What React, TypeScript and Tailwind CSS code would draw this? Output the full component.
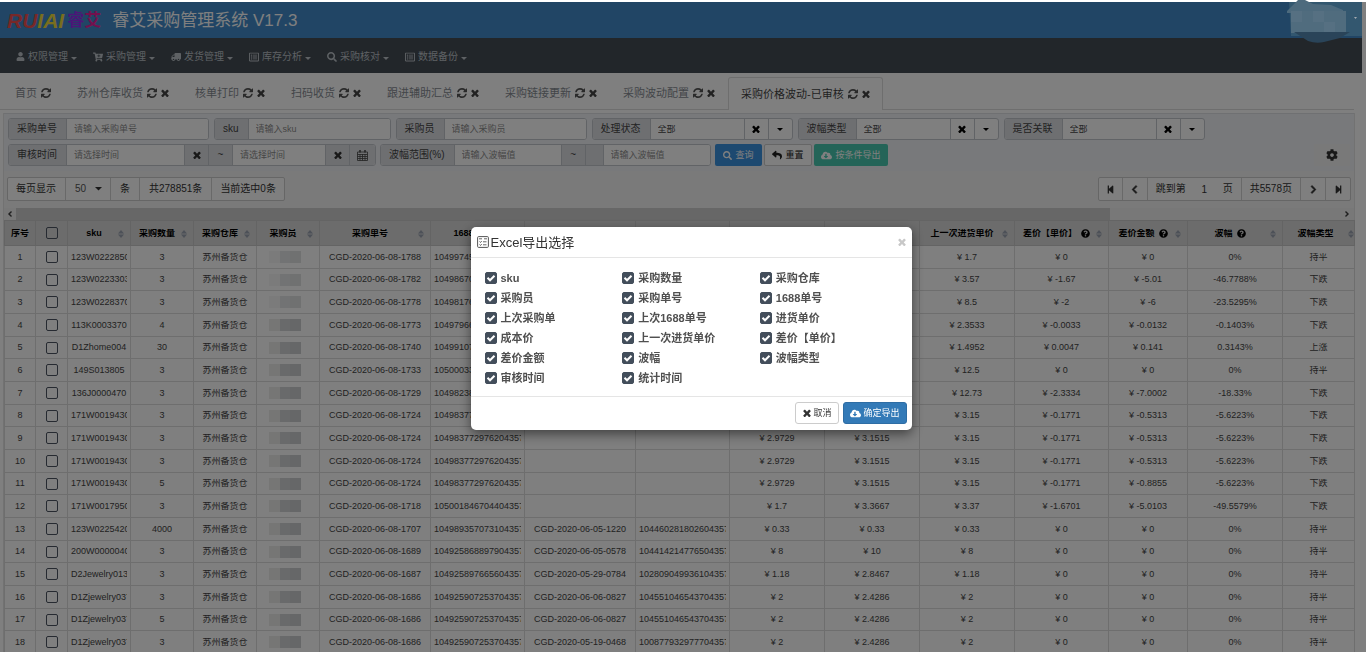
import { useState } from "react";
import type { ReactNode } from "react";
import {
  FaCartPlus,
  FaChevronLeft,
  FaChevronRight,
  FaCloudDownloadAlt,
  FaCog,
  FaQuestionCircle,
  FaRegListAlt,
  FaReply,
  FaSearch,
  FaStepBackward,
  FaStepForward,
  FaTruck,
  FaUser,
} from "react-icons/fa";

const TimesIcon = () => (
  <svg viewBox="256 256 1280 1280" fill="currentColor" className="size-2 shrink-0">
    <path d="M1490 1322q0 40-28 68l-136 136q-28 28-68 28t-68-28l-294-294-294 294q-28 28-68 28t-68-28l-136-136q-28-28-28-68t28-68l294-294-294-294q-28-28-28-68t28-68l136-136q28-28 68-28t68 28l294 294 294-294q28-28 68-28t68 28l136 136q28 28 28 68t-28 68l-294 294 294 294q28 28 28 68z" />
  </svg>
);

const RefreshIcon = () => (
  <svg viewBox="128 128 1536 1536" fill="currentColor" className="size-[10px]">
    <path d="M1639 1056q0 5-1 7-64 268-268 434.500t-478 166.500q-146 0-282.500-55t-243.500-157l-129 129q-19 19-45 19t-45-19-19-45v-448q0-26 19-45t45-19h448q26 0 45 19t19 45-19 45l-137 137q71 66 161 102t187 36q134 0 250-65t186-179q11-17 53-117 8-23 30-23h192q13 0 22.500 9.500t9.500 22.500zm25-800v448q0 26-19 45t-45 19h-448q-26 0-45-19t-19-45 19-45l138-138q-148-137-349-137-134 0-250 65t-186 179q-11 17-53 117-8 23-30 23h-199q-13 0-22.500-9.500t-9.500-22.500v-7q65-268 270-434.500t480-166.500q146 0 284 55.500t245 156.500l130-129q19-19 45-19t45 19 19 45z" />
  </svg>
);

const CaretIcon = ({ className = "w-[7px]" }: { className?: string }) => (
  <svg viewBox="0 0 8 4" fill="currentColor" className={className}>
    <path d="M0 0h8L4 4z" />
  </svg>
);

const SortIcon = () => (
  <svg viewBox="0 0 6 8" className="w-[6px] shrink-0 translate-y-px fill-[#9aa2b0]">
    <path d="M3 0l3 3.400H0zM3 8l3-3.400H0z" />
  </svg>
);

const CalendarIcon = () => (
  <svg viewBox="0 0 11 11" className="size-[11px]" fill="none" stroke="currentColor">
    <path d="M.5 2h10v8.500H.5zM.5 4.500h10M.5 6.500h10M.5 8.500h10M3 4v6.500M5.500 4v6.500M8 4v6.500" strokeWidth=".8" />
    <path d="M3 0v2.500M8 0v2.500" strokeWidth="1.500" />
  </svg>
);

const FormIcon = () => (
  <svg viewBox="0 0 12 12" className="size-3" fill="none" stroke="#555">
    <rect x=".6" y=".6" width="10.800" height="10.800" rx="1" />
    <path d="M2 2.800h3M7 2.800h3M2.500 5.500l1 1 1.200-1.500M6 5.800h3.500M2.500 8.500l1 1 1.200-1.500M6 8.800h3.500" strokeWidth=".9" />
  </svg>
);

const menus = [
  { title: "权限管理", icon: <FaUser className="size-[9px]" /> },
  { title: "采购管理", icon: <FaCartPlus className="size-[10px]" /> },
  { title: "发货管理", icon: <FaTruck className="size-[10px] -scale-x-100" /> },
  { title: "库存分析", icon: <FaRegListAlt className="size-[10px]" /> },
  { title: "采购核对", icon: <FaSearch className="size-[10px]" /> },
  { title: "数据备份", icon: <FaRegListAlt className="size-[10px]" /> },
];

const tabs = ["首页", "苏州仓库收货", "核单打印", "扫码收货", "跟进辅助汇总", "采购链接更新", "采购波动配置", "采购价格波动-已审核"];

const columns = [
  { title: "序号", width: "w-[31px]" },
  { title: "", width: "w-[32px]" },
  { title: "sku", width: "w-[63px]", sort: true },
  { title: "采购数量", width: "w-[63px]", sort: true },
  { title: "采购仓库", width: "w-[63px]", sort: true },
  { title: "采购员", width: "w-[63px]", sort: true },
  { title: "采购单号", width: "w-[111px]", sort: true },
  { title: "1688单号", width: "w-[94px]", sort: true },
  { title: "上次采购单", width: "w-[111px]", sort: true },
  { title: "上次1688单号", width: "w-[94px]", sort: true },
  { title: "进货单价", width: "w-[95px]", sort: true },
  { title: "成本价", width: "w-[95px]", sort: true },
  { title: "上一次进货单价", width: "w-[95px]", sort: true },
  { title: "差价【单价】", width: "w-[94px]", sort: true, help: true },
  { title: "差价金额", width: "w-[79px]", sort: true, help: true },
  { title: "波幅", width: "w-[95px]", sort: true, help: true },
  { title: "波幅类型", width: "w-[72px]", sort: true },
];

// sku, count, order, 1688 order, last order, last 1688 order, price, cost, last price, diff, diff total, rate, type
const rows = [
  ["123W0222850", "3", "CGD-2020-06-08-1788", "104997451297604357", "", "", "", "", "1.7", "0", "0", "0%", "持平"],
  ["123W0223303", "3", "CGD-2020-06-08-1782", "104986701297604357", "", "", "", "", "3.57", "-1.67", "-5.01", "-46.7788%", "下跌"],
  ["123W0228370", "3", "CGD-2020-06-08-1778", "104981761297604357", "", "", "", "", "8.5", "-2", "-6", "-23.5295%", "下跌"],
  ["113K0003370", "4", "CGD-2020-06-08-1773", "104979661297604357", "", "", "", "", "2.3533", "-0.0033", "-0.0132", "-0.1403%", "下跌"],
  ["D1Zhome004", "30", "CGD-2020-06-08-1740", "104991071297604357", "", "", "", "", "1.4952", "0.0047", "0.141", "0.3143%", "上涨"],
  ["149S013805", "3", "CGD-2020-06-08-1733", "105000331297604357", "", "", "", "", "12.5", "0", "0", "0%", "持平"],
  ["136J0000470", "3", "CGD-2020-06-08-1729", "104982381297604357", "", "", "", "", "12.73", "-2.3334", "-7.0002", "-18.33%", "下跌"],
  ["171W0019430", "3", "CGD-2020-06-08-1724", "104983772976204357", "", "", "", "", "3.15", "-0.1771", "-0.5313", "-5.6223%", "下跌"],
  ["171W0019430", "3", "CGD-2020-06-08-1724", "104983772976204357", "", "", "2.9729", "3.1515", "3.15", "-0.1771", "-0.5313", "-5.6223%", "下跌"],
  ["171W0019430", "3", "CGD-2020-06-08-1724", "104983772976204357", "", "", "2.9729", "3.1515", "3.15", "-0.1771", "-0.5313", "-5.6223%", "下跌"],
  ["171W0019430", "5", "CGD-2020-06-08-1724", "104983772976204357", "", "", "2.9729", "3.1515", "3.15", "-0.1771", "-0.8855", "-5.6223%", "下跌"],
  ["171W0017950", "3", "CGD-2020-06-08-1718", "105001846704404357", "", "", "1.7", "3.3667", "3.37", "-1.6701", "-5.0103", "-49.5579%", "下跌"],
  ["123W0225420", "4000", "CGD-2020-06-08-1707", "104989357073104357", "CGD-2020-06-05-1220", "104460281802604357", "0.33", "0.33", "0.33", "0", "0", "0%", "持平"],
  ["200W0000040", "3", "CGD-2020-06-08-1689", "104925868897904357", "CGD-2020-06-05-0578", "104414214776504357", "8", "10", "8", "0", "0", "0%", "持平"],
  ["D2Jewelry013", "3", "CGD-2020-06-08-1687", "104925897665604357", "CGD-2020-05-29-0784", "102809049936104357", "1.18", "2.8467", "1.18", "0", "0", "0%", "持平"],
  ["D1Zjewelry037", "3", "CGD-2020-06-08-1686", "104925907253704357", "CGD-2020-06-06-0827", "104551046543704357", "2", "2.4286", "2", "0", "0", "0%", "持平"],
  ["D1Zjewelry037", "5", "CGD-2020-06-08-1686", "104925907253704357", "CGD-2020-06-06-0827", "104551046543704357", "2", "2.4286", "2", "0", "0", "0%", "持平"],
  ["D1Zjewelry037", "3", "CGD-2020-06-08-1686", "104925907253704357", "CGD-2020-05-19-0468", "100877932977704357", "2", "2.4286", "2", "0", "0", "0%", "持平"],
];

const exportFields = [
  "sku", "采购数量", "采购仓库",
  "采购员", "采购单号", "1688单号",
  "上次采购单", "上次1688单号", "进货单价",
  "成本价", "上一次进货单价", "差价【单价】",
  "差价金额", "波幅", "波幅类型",
  "审核时间", "统计时间",
];

const addon = "flex items-center justify-center border-r border-[#c3c6cc] bg-[#dddfe3]";
const group = "flex h-[22px] overflow-hidden rounded-[3px] border border-[#c3c6cc] bg-white text-[10px] text-[#444]";
const field = "min-w-0 bg-white px-[7px] text-[9px] text-[#444] outline-none placeholder:text-[#8c8c8c]";
const box = "mx-auto block size-3 appearance-none rounded-[2px] border border-[#4d5562]";

function InputGroup({ id, label }: { id: string; label: string }) {
  return (
    <div className={group}>
      <label htmlFor={id} className={`${addon} pr-[9px] pl-2`}>{label}</label>
      <input id={id} type="text" placeholder={`请输入${label}`} className={`${field} w-[141px]`} />
    </div>
  );
}

function SelectGroup({ id, label }: { id: string; label: string }) {
  return (
    <div className={group}>
      <label htmlFor={id} className={`${addon} pr-[9px] pl-2`}>{label}</label>
      <select id={id} className={`${field} w-[93px] appearance-none`}>
        <option>全部</option>
      </select>
      <button aria-label="清除" className="flex w-6 items-center justify-center border-l border-[#c3c6cc] text-black">
        <TimesIcon />
      </button>
      <button aria-label="展开" className="flex w-6 items-center justify-center border-l border-[#c3c6cc] text-black">
        <CaretIcon className="w-[6px]" />
      </button>
    </div>
  );
}

function Checkbox({ label, checked, onChange }: { label: string; checked: boolean; onChange: () => void }) {
  return (
    <label className="flex h-5 items-center gap-1 text-[11px] font-bold text-[#505050]">
      <span className="relative size-3">
        <input
          type="checkbox"
          checked={checked}
          onChange={onChange}
          className="block size-3 appearance-none rounded-[2px] border border-[#434e5b] checked:bg-[#434e5b]"
        />
        {checked && (
          <svg viewBox="0 0 12 12" className="pointer-events-none absolute inset-0" fill="none" stroke="#fff" strokeWidth="2">
            <path d="M2.500 5.800l2.500 2.500 4.500-4.600" />
          </svg>
        )}
      </span>
      {label}
    </label>
  );
}

function Cell({ children }: { children?: ReactNode }) {
  return (
    <td className="border border-[#dcdcdc] px-[3px] py-0">
      <div className="overflow-hidden whitespace-nowrap">{children}</div>
    </td>
  );
}

function ExportModal() {
  const [selected, setSelected] = useState<string[]>(exportFields);

  const toggle = (name: string) => {
    setSelected(selected.includes(name) ? selected.filter((s) => s !== name) : [...selected, name]);
  };

  return (
    <div role="dialog" aria-label="Excel导出选择" className="w-[441px] rounded-[5px] bg-white shadow-[0_4px_12px_rgba(0,0,0,0.5)]">
      <div className="flex h-[31px] items-center gap-[2px] border-b border-[#e5e5e5] px-[6px]">
        <FormIcon />
        <h4 className="flex-1 text-[13px] text-[#333]">Excel导出选择</h4>
        <button aria-label="关闭" className="text-[#c8c8c8]">
          <TimesIcon />
        </button>
      </div>
      <div className="grid grid-cols-3 px-[14px] pt-[10px] pb-2">
        {exportFields.map((name) => (
          <Checkbox key={name} label={name} checked={selected.includes(name)} onChange={() => toggle(name)} />
        ))}
      </div>
      <div className="flex justify-end gap-1 border-t border-[#e5e5e5] px-[5px] pt-[5px] pb-[6px] text-[9px]">
        <button className="flex h-[22px] items-center gap-[2px] rounded-[3px] border border-[#ccc] px-[7px] text-[#333]">
          <TimesIcon />
          取消
        </button>
        <button className="flex h-[22px] items-center gap-[2px] rounded-[3px] border border-[#2e6da4] bg-[#337ab7] px-[6px] text-white">
          <FaCloudDownloadAlt className="size-[11px]" />
          确定导出
        </button>
      </div>
    </div>
  );
}

export default function App() {
  return (
    <div className="h-screen overflow-hidden bg-white pt-[2px] font-['Liberation_Sans','Noto_Sans_CJK_SC',sans-serif] leading-none text-[#333]">
      <header className="mr-1">
        <div className="flex h-9 items-center bg-[#428bca] pl-[7px]">
          <a href="#" className="flex items-center gap-[3px] font-bold" aria-label="RUIAI睿艾">
            <span className="text-[21px] text-[#f0dc3c] italic">
              <span className="text-[#f05050]">RU</span>IAI
            </span>
            <span className="text-[17px] text-[#962cf0]">
              睿<span className="text-[#e6209c]">艾</span>
            </span>
          </a>
          <h1 className="ml-[11px] pt-px text-[17px] text-white">睿艾采购管理系统 V17.3</h1>
        </div>
        <nav className="flex h-[35px] items-center gap-4 bg-[#444c54] pt-[2px] pl-4 text-[10px] text-[#bcc2c8]">
          {menus.map((menu) => (
            <a key={menu.title} href="#" className="flex items-center gap-[3px]">
              {menu.icon}
              {menu.title}
              <CaretIcon className="mt-1 w-[6px]" />
            </a>
          ))}
        </nav>
      </header>

      <div className="mr-3 flex h-[37px] items-end border-b border-[#ddd] pl-[2px] text-[11px] text-[#868b92]">
        {tabs.map((tab, i) => (
          <div
            key={tab}
            className={
              i === tabs.length - 1
                ? "-mb-px flex h-[33px] items-center gap-1 rounded-t-[3px] border border-b-0 border-[#ddd] bg-white px-3 text-[#444]"
                : "flex h-8 items-center gap-1 px-[13px]"
            }
          >
            <a href="#">{tab}</a>
            <button aria-label="刷新" className="text-[#555]">
              <RefreshIcon />
            </button>
            {i > 0 && (
              <button aria-label="关闭" className="text-[#444]">
                <TimesIcon />
              </button>
            )}
          </div>
        ))}
      </div>

      <main className="mt-[3px] mr-[11px] ml-[3px] border-x border-[#e4e4e4]">
        <section className="flex flex-col gap-1 border-t border-[#dfe1e5] bg-[#f1f3f7] px-1 pt-1 pb-[5px]">
          <div className="flex gap-[5px]">
            <InputGroup id="order" label="采购单号" />
            <InputGroup id="sku" label="sku" />
            <InputGroup id="buyer" label="采购员" />
            <SelectGroup id="status" label="处理状态" />
            <SelectGroup id="type" label="波幅类型" />
            <SelectGroup id="linked" label="是否关联" />
          </div>
          <div className="flex items-center">
            <div className={group}>
              <label htmlFor="from" className={`${addon} pr-[9px] pl-2`}>审核时间</label>
              <input id="from" type="text" placeholder="请选择时间" className={`${field} w-[117px]`} />
              <button aria-label="清除" className={`${addon} w-[25px] border-l text-[#333]`}>
                <TimesIcon />
              </button>
              <span className={`${addon} w-6`}>~</span>
              <input aria-label="结束时间" type="text" placeholder="请选择时间" className={`${field} w-[92px]`} />
              <button aria-label="清除" className={`${addon} w-[25px] border-l text-[#333]`}>
                <TimesIcon />
              </button>
              <button aria-label="选择日期" className={`${addon} w-[25px] border-r-0`}>
                <CalendarIcon />
              </button>
            </div>
            <div className={`${group} ml-1`}>
              <label htmlFor="min" className={`${addon} pr-[9px] pl-2`}>波幅范围(%)</label>
              <input id="min" type="text" placeholder="请输入波幅值" className={`${field} w-[106px]`} />
              <span className={`${addon} w-[25px] border-l`}>~</span>
              <span className={`${addon} w-[18px]`} />
              <input aria-label="最大波幅" type="text" placeholder="请输入波幅值" className={`${field} w-[106px]`} />
            </div>
            <div className="ml-1 flex gap-[2px] text-[9px] whitespace-nowrap">
              <button className="flex h-[22px] items-center gap-1 rounded-[2px] bg-[#3a92e0] px-2 text-white">
                <FaSearch className="size-[9px]" />
                查询
              </button>
              <button className="flex h-[22px] items-center gap-1 rounded-[2px] border border-[#ccc] bg-white px-[7px] text-[#222]">
                <FaReply className="size-[10px]" />
                重置
              </button>
              <button className="flex h-[22px] items-center gap-1 rounded-[2px] bg-[#48c9b0] px-[7px] text-white">
                <FaCloudDownloadAlt className="size-[11px]" />
                按条件导出
              </button>
            </div>
            <button aria-label="设置" className="ml-auto flex h-[22px] w-[36px] items-center justify-center bg-[#f3f3f3] text-[#333]">
              <FaCog className="size-3" />
            </button>
          </div>
        </section>

        <section className="flex items-center justify-between bg-[#f4f4f4] pt-[6px] pr-[3px] pb-[7px] pl-[3px] text-[10px] text-[#333]">
          <div className="flex h-6 items-stretch divide-x divide-[#d2d2d2] rounded-[2px] border border-[#ccc] bg-white">
            <label htmlFor="size" className="flex items-center pr-[9px] pl-2">每页显示</label>
            <div className="flex w-[45px] items-center pr-2 pl-[9px]">
              <select id="size" className="min-w-0 flex-1 appearance-none text-[#555] outline-none">
                <option>50</option>
              </select>
              <CaretIcon />
            </div>
            <span className="flex items-center px-[9px]">条</span>
            <span className="flex items-center px-[9px]">共278851条</span>
            <span className="flex items-center px-2">当前选中0条</span>
          </div>
          <div className="flex h-6 items-stretch divide-x divide-[#d2d2d2] rounded-[2px] border border-[#ccc] bg-white">
            <button aria-label="首页" className="flex w-6 items-center justify-center">
              <FaStepBackward className="size-[9px]" />
            </button>
            <button aria-label="上一页" className="flex w-[25px] items-center justify-center">
              <FaChevronLeft className="size-[9px]" stroke="currentColor" strokeWidth={40} />
            </button>
            <label className="flex items-center px-2">
              跳到第
              <input type="text" defaultValue="1" className="w-[37px] text-center outline-none" />
              页
            </label>
            <span className="flex items-center px-2">共5578页</span>
            <button aria-label="下一页" className="flex w-[25px] items-center justify-center">
              <FaChevronRight className="size-[9px]" stroke="currentColor" strokeWidth={40} />
            </button>
            <button aria-label="末页" className="flex w-6 items-center justify-center">
              <FaStepForward className="size-[9px]" />
            </button>
          </div>
        </section>

        <div className="flex h-3 items-center bg-[#f1f1f1]">
          <FaChevronLeft className="mx-[3px] size-[6px]" stroke="currentColor" strokeWidth={40} />
          <div className="h-3 w-[81%] bg-[#cfcfcf]" />
          <FaChevronRight className="mr-1 ml-auto size-[6px]" stroke="currentColor" strokeWidth={40} />
        </div>

        <table className="w-full table-fixed border-collapse text-center text-[9px] text-[#444]">
          <thead className="bg-[#d8d8d8] text-black">
            <tr className="h-[25px]">
              {columns.map((col, i) => (
                <th key={i} className={`${col.width} border border-[#c8c8c8] p-0`}>
                  {i === 1 ? (
                    <input aria-label="全选" type="checkbox" className={box} />
                  ) : (
                    <div className={`flex items-center whitespace-nowrap ${i === 16 ? "" : col.sort ? "pr-[6px] pl-[2px]" : ""}`}>
                      <span className="flex flex-1 items-center justify-center gap-1 overflow-hidden">
                        {col.title}
                        {col.help && <FaQuestionCircle className="size-[9px] shrink-0" />}
                      </span>
                      {col.sort && <SortIcon />}
                    </div>
                  )}
                </th>
              ))}
            </tr>
          </thead>
          <tbody>
            {rows.map((row, i) => (
              <tr key={i} className="h-[23px] nth-[3n+2]:h-[22px]">
                <Cell>{i + 1}</Cell>
                <Cell>
                  <input aria-label={row[0]} type="checkbox" className={box} />
                </Cell>
                <Cell>{row[0]}</Cell>
                <Cell>{row[1]}</Cell>
                <Cell>苏州备货仓</Cell>
                <Cell>
                  <div className="ml-[9px] flex h-3 w-8">
                    <span className={i < 3 ? "flex-1 bg-[#f6f6f6]" : "flex-1 bg-[#ececea]"} />
                    <span className={i < 3 ? "flex-1 bg-[#e4e7e8]" : "flex-1 bg-[#d3d4d6]"} />
                    <span className={i < 3 ? "flex-1 bg-[#e0e2e2]" : "flex-1 bg-[#cdced0]"} />
                  </div>
                </Cell>
                <Cell>{row[2]}</Cell>
                <Cell>{row[3]}</Cell>
                <Cell>{row[4]}</Cell>
                <Cell>{row[5]}</Cell>
                {row.slice(6, 11).map((price, j) => (
                  <Cell key={j}>{price && `¥ ${price}`}</Cell>
                ))}
                <Cell>{row[11]}</Cell>
                <Cell>{row[12]}</Cell>
              </tr>
            ))}
          </tbody>
        </table>
      </main>

      <div className="fixed inset-x-0 top-[2px] bottom-0 flex items-center justify-center bg-black/50 pt-[3px] pl-4">
        <ExportModal />
      </div>

      {/* masked account name */}
      <svg viewBox="0 0 80 44" className="absolute top-0 right-1 h-11 w-20">
        <path d="M7 2h73v34H9z" fill="#33576f" />
        <path d="M5 11L16 0h7l8 4 18 1 12 5v3H5z" fill="#4d6a7d" />
        <path d="M9 11h55v22H9z" fill="#506c7e" />
        <path d="M9 11h11v11H9zM31 11h11v11H31zM42 22h11v11H42z" fill="#567082" />
        <path d="M12 32h56l-10 6-16 4q-8 2-16-1z" fill="#2a4459" />
        <path d="M72 17h3l-1.500 2z" fill="#a3aab0" />
      </svg>
    </div>
  );
}
